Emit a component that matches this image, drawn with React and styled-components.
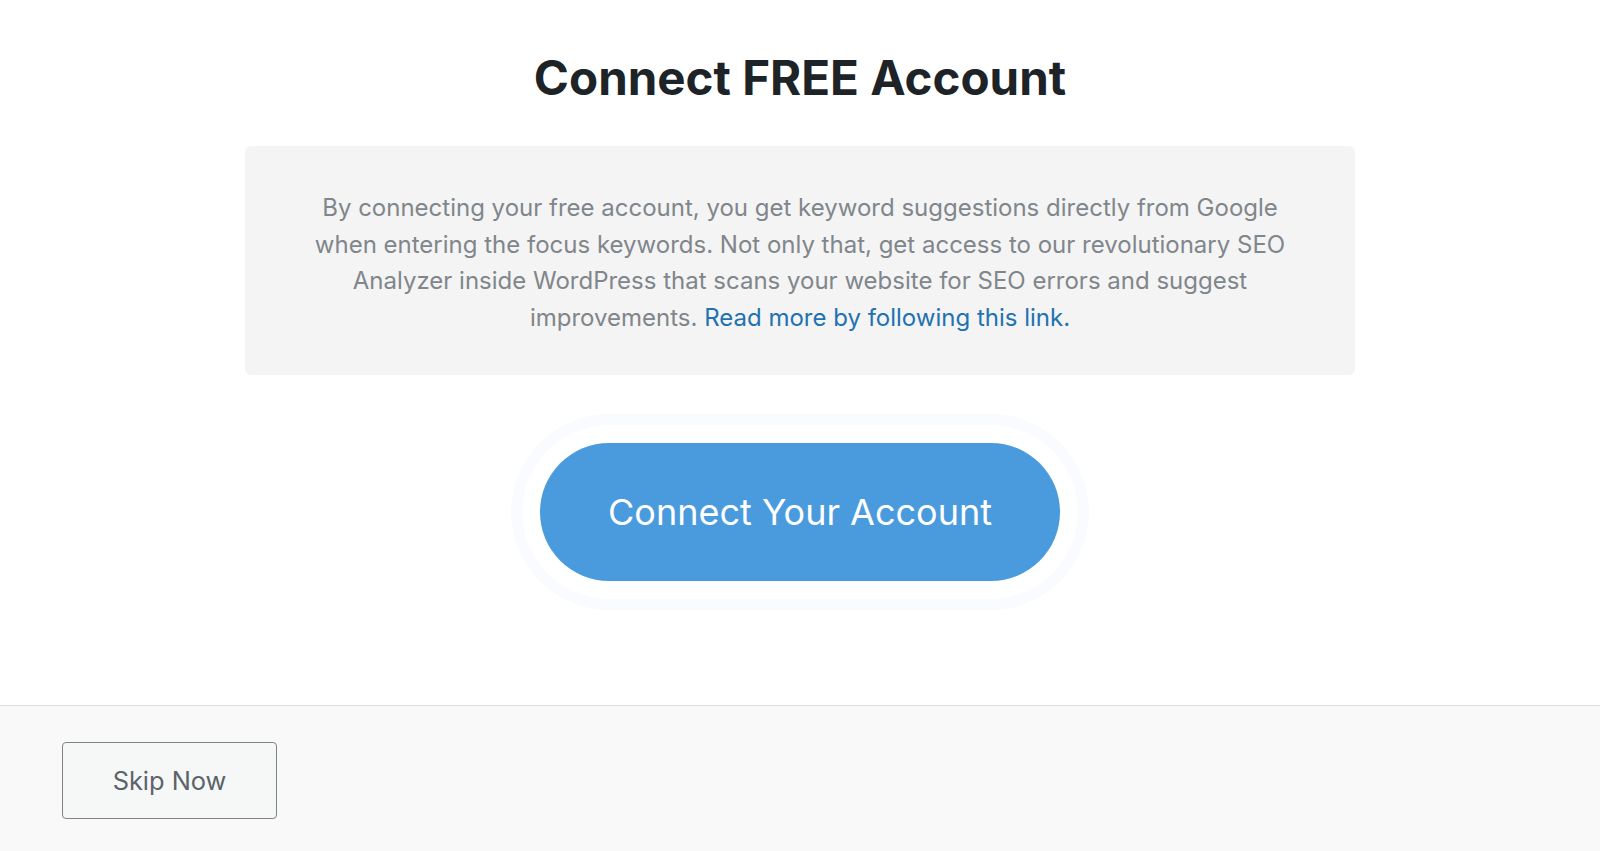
import styled, { createGlobalStyle } from 'styled-components';

const GlobalStyle = createGlobalStyle`
  html, body {
    margin: 0;
    padding: 0;
    background: #ffffff;
    font-family: Inter, "Liberation Sans", Arial, sans-serif;
  }
`;

const App = () => {
  return (
    <>
      <GlobalStyle />
      <Page>
        <Main>
          <Title>Connect FREE Account</Title>
          <InfoBox>
            By connecting your free account, you get keyword suggestions directly from Google
            when entering the focus keywords. Not only that, get access to our revolutionary SEO
            Analyzer inside WordPress that scans your website for SEO errors and suggest
            improvements. <InfoLink href="#">Read more by following this link.</InfoLink>
          </InfoBox>
          <ConnectButton type="button">Connect Your Account</ConnectButton>
        </Main>
        <Footer>
          <SkipButton type="button">Skip Now</SkipButton>
        </Footer>
      </Page>
    </>
  );
};

export default App;

const Page = styled.div`
  display: flex;
  flex-direction: column;
  min-height: 100vh;
`;

const Main = styled.main`
  display: flex;
  flex-direction: column;
  align-items: center;
  height: 705px;
  box-sizing: border-box;
  padding-top: 50px;
`;

const Title = styled.h1`
  margin: 0 0 40px;
  font-size: 47.5px;
  font-weight: 700;
  line-height: 56px;
  color: #1d2327;
`;

const InfoBox = styled.p`
  box-sizing: border-box;
  width: 1110px;
  margin: 0;
  padding: 44px 60px 38px;
  background: #f4f4f4;
  border-radius: 6px;
  font-size: 24px;
  line-height: 36.7px;
  color: #80868b;
  text-align: center;
`;

const InfoLink = styled.a`
  color: #2271b1;
  text-decoration: none;
`;

const ConnectButton = styled.button`
  margin-top: 68px;
  width: 520px;
  height: 138px;
  border: none;
  border-radius: 69px;
  background: #4a9bdd;
  color: #ffffff;
  font-family: Inter, "Liberation Sans", Arial, sans-serif;
  font-size: 36px;
  cursor: pointer;
  box-shadow: 0 0 0 18px #ffffff, 0 0 0 29px #f9fbfe;
`;

const Footer = styled.footer`
  flex: 1;
  display: flex;
  align-items: flex-start;
  padding: 36px 62px;
  background: #f9f9f9;
  border-top: 1px solid #dcdcde;
`;

const SkipButton = styled.button`
  width: 215px;
  height: 77px;
  background: #f6f7f7;
  border: 1px solid #7e8489;
  border-radius: 4px;
  color: #5c636a;
  font-family: Inter, "Liberation Sans", Arial, sans-serif;
  font-size: 25.4px;
  cursor: pointer;
`;
